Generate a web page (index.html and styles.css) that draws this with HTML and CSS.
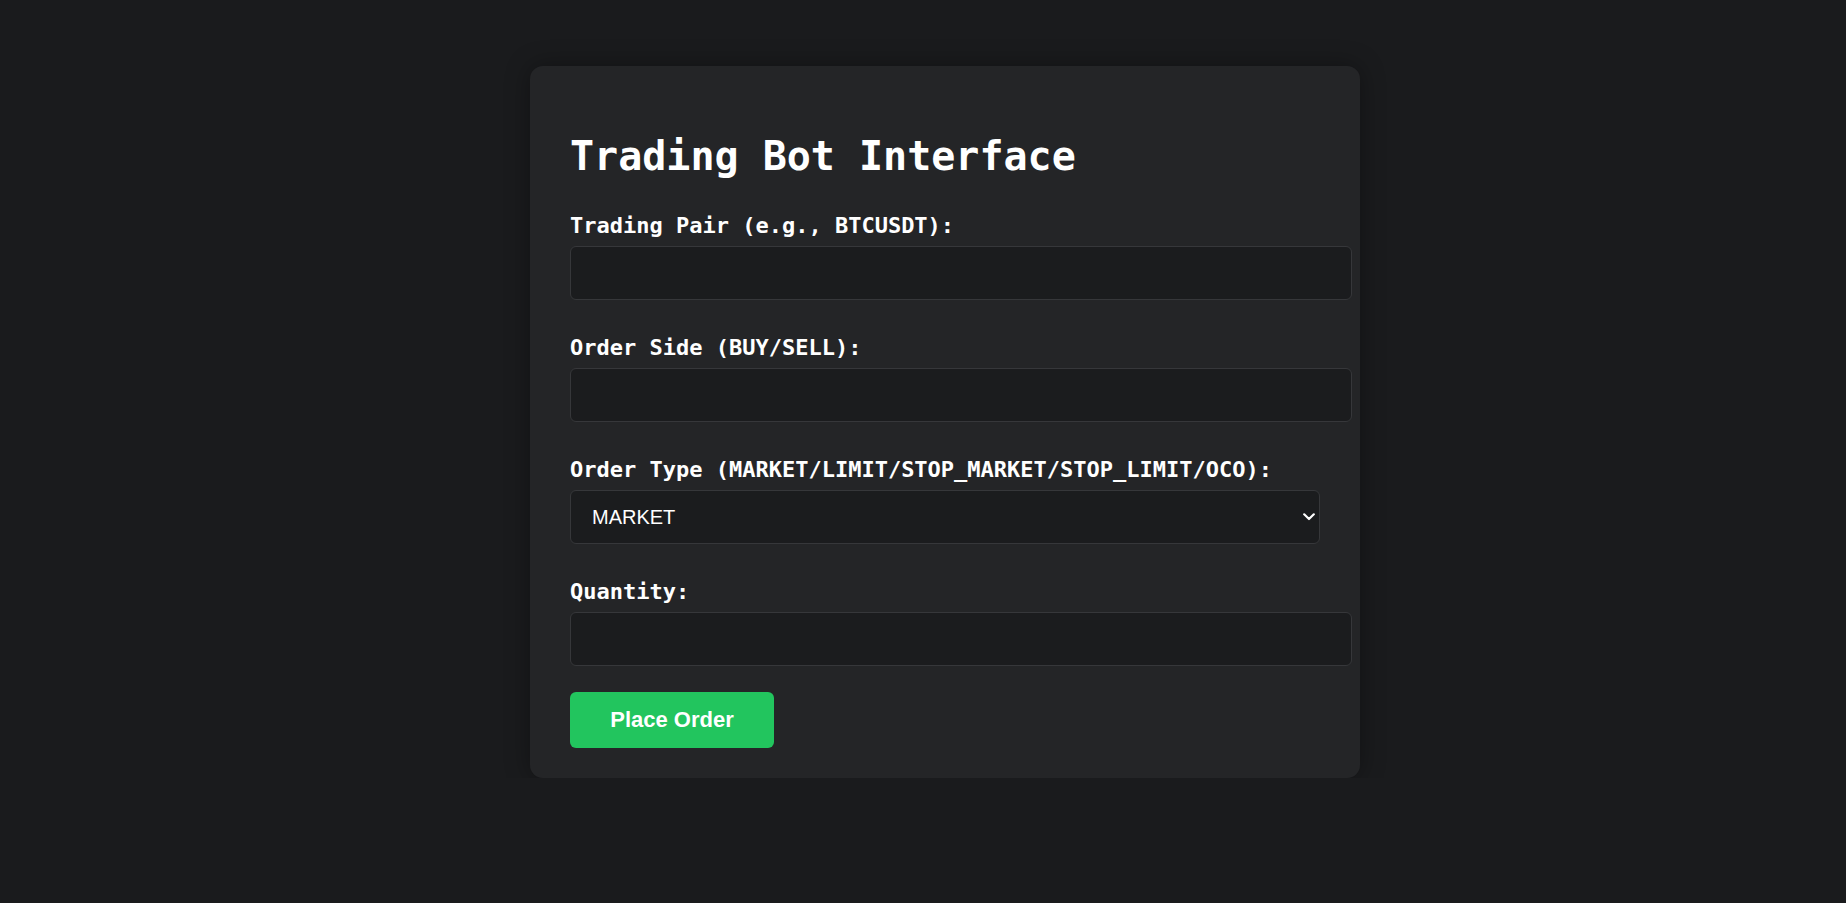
FILE: index.html
```html
<!DOCTYPE html>
<html lang="en">
<head>
<meta charset="utf-8">
<title>Trading Bot Interface</title>
<link rel="stylesheet" href="styles.css">
</head>
<body>
<main class="page">
  <section class="card">
    <h1 class="title">Trading Bot Interface</h1>
    <form class="form">
      <div class="field">
        <label class="label" for="pair">Trading Pair (e.g., BTCUSDT):</label>
        <input class="input" id="pair" type="text">
      </div>
      <div class="field">
        <label class="label" for="side">Order Side (BUY/SELL):</label>
        <input class="input" id="side" type="text">
      </div>
      <div class="field">
        <label class="label" for="type">Order Type (MARKET/LIMIT/STOP_MARKET/STOP_LIMIT/OCO):</label>
        <div class="select-wrap">
          <select class="select" id="type">
            <option>MARKET</option>
            <option>LIMIT</option>
            <option>STOP_MARKET</option>
            <option>STOP_LIMIT</option>
            <option>OCO</option>
          </select>
          <svg class="chevron" width="12" height="8" viewBox="0 0 12 8" aria-hidden="true">
            <path d="M1.2 1.3 L6 6 L10.8 1.3" fill="none" stroke="#ffffff" stroke-width="2.2" stroke-linecap="round" stroke-linejoin="round"/>
          </svg>
        </div>
      </div>
      <div class="field">
        <label class="label" for="qty">Quantity:</label>
        <input class="input" id="qty" type="text">
      </div>
      <button class="btn" type="button">Place Order</button>
    </form>
  </section>
</main>
</body>
</html>
```

FILE: styles.css
```css
html, body {
  margin: 0;
  padding: 0;
  background: #1a1b1d;
  min-height: 100%;
}

body {
  font-family: "DejaVu Sans Mono", "Liberation Mono", monospace;
  color: #ffffff;
}

.page {
  display: flex;
  justify-content: center;
  padding: 66px 0 0 44px;
}

.card {
  box-sizing: border-box;
  width: 830px;
  background: #242527;
  border-radius: 13px;
  padding: 40px 40px 30px;
  box-shadow: 0 0 24px rgba(0, 0, 0, 0.35);
}

.title {
  margin: 26px 0 33px;
  font-size: 40px;
  line-height: 48px;
  font-weight: bold;
  color: #ffffff;
}

.form {
  display: flex;
  flex-direction: column;
  align-items: flex-start;
}

.field {
  display: flex;
  flex-direction: column;
  align-items: flex-start;
  width: 100%;
}

.field + .field {
  margin-top: 35px;
}

.label {
  display: block;
  font-size: 22px;
  line-height: 26px;
  font-weight: bold;
  margin-bottom: 7px;
  color: #ffffff;
}

.input {
  box-sizing: content-box;
  width: 100%;
  height: 22px;
  padding: 15px;
  margin: 0;
  border: 1px solid #36373a;
  border-radius: 6px;
  background: #1b1c1e;
  color: #ffffff;
  font-family: "Liberation Sans", Arial, sans-serif;
  font-size: 20px;
  outline: none;
}

.select-wrap {
  position: relative;
  width: 750px;
}

.select {
  display: block;
  box-sizing: border-box;
  width: 100%;
  height: 54px;
  padding: 0 30px 0 21px;
  margin: 0;
  border: 1px solid #36373a;
  border-radius: 6px;
  background: #1b1c1e;
  color: #ffffff;
  font-family: "Liberation Sans", Arial, sans-serif;
  font-size: 20px;
  appearance: none;
  -webkit-appearance: none;
  outline: none;
}

.chevron {
  position: absolute;
  right: 5px;
  top: 23px;
  pointer-events: none;
}

.btn {
  margin-top: 26px;
  width: 204px;
  height: 56px;
  padding: 0;
  border: none;
  border-radius: 6px;
  background: #22c55e;
  color: #ffffff;
  font-family: "Liberation Sans", Arial, sans-serif;
  font-size: 22px;
  font-weight: bold;
  cursor: pointer;
}
```
